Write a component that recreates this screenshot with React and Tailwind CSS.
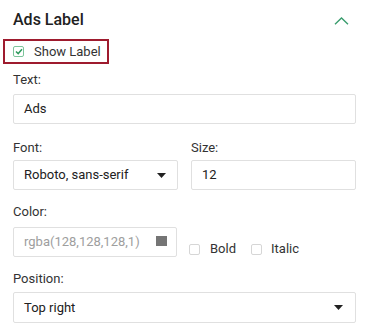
const Caret = () => (
  <svg width="9" height="5" viewBox="0 0 9 5" className="shrink-0">
    <path d="M0 0 L9 0 L4.5 5 Z" fill="#212121" />
  </svg>
);

const Check = ({ checked }) => (
  <span
    className={
      'w-[11px] h-[11px] rounded-[2px] border flex items-center justify-center shrink-0 ' +
      (checked ? 'border-[#7cc49a]' : 'border-[#d6d6d6]')
    }
  >
    {checked && (
      <svg width="8" height="7" viewBox="0 0 8 7">
        <path d="M1 3.5 L3.2 5.6 L7 1.3" fill="none" stroke="#2f9a5e" strokeWidth="1.5" />
      </svg>
    )}
  </span>
);

const App = () => {
  return (
    <div className="w-[369px] h-[331px] bg-white px-[13px] pt-2 font-['Roboto',sans-serif] text-[#212121] overflow-hidden">
      <div className="flex items-center justify-between h-6">
        <h2 className="text-[16px] leading-6 font-medium">Ads Label</h2>
        <svg width="15" height="8" viewBox="0 0 15 8" className="mr-[7px] mt-[2px]">
          <path d="M1 7.2 L7.5 1 L14 7.2" fill="none" stroke="#3a9d6e" strokeWidth="1.4" />
        </svg>
      </div>

      <label className="mt-[7px] -ml-[10px] w-[106px] h-[25px] border-2 border-[#9e1b2e] flex items-center pl-2 gap-[10px]">
        <Check checked />
        <span className="text-[13px] leading-4 text-[#333]">Show Label</span>
      </label>

      <div className="mt-2">
        <div className="text-[13px] leading-4 text-[#333] mb-1.5">Text:</div>
        <div className="h-[30px] border border-[#e0e0e0] rounded-[2px] flex items-center px-[10px] text-[13px]">
          Ads
        </div>
      </div>

      <div className="grid grid-cols-2 gap-[13px] mt-4">
        <div>
          <div className="text-[13px] leading-4 text-[#333] mb-1">Font:</div>
          <div className="h-[30px] border border-[#e0e0e0] rounded-[2px] flex items-center justify-between pl-[10px] pr-[11px] text-[13px]">
            <span>Roboto, sans-serif</span>
            <Caret />
          </div>
        </div>
        <div>
          <div className="text-[13px] leading-4 text-[#333] mb-1">Size:</div>
          <div className="h-[30px] border border-[#e0e0e0] rounded-[2px] flex items-center px-[10px] text-[13px]">
            12
          </div>
        </div>
      </div>

      <div className="mt-[14px]">
        <div className="text-[13px] leading-4 text-[#333] mb-[7px]">Color:</div>
        <div className="flex items-start gap-[12px]">
          <div className="w-[164px] h-[30px] border border-[#e0e0e0] rounded-[2px] flex items-center justify-between pl-[10px] pr-[9px] text-[13px] text-[#9e9e9e]">
            <span>rgba(128,128,128,1)</span>
            <span className="w-[11px] h-[10px] bg-[#757575] -mt-[2px]" />
          </div>
          <div className="flex items-center h-4 mt-[14px] text-[13px] leading-4 text-[#333]">
            <Check />
            <span className="ml-[10px]">Bold</span>
            <span className="ml-[15px]"><Check /></span>
            <span className="ml-[9px]">Italic</span>
          </div>
        </div>
      </div>

      <div className="mt-[14px]">
        <div className="text-[13px] leading-4 text-[#333] mb-[5px]">Position:</div>
        <div className="h-[31px] border border-[#e0e0e0] rounded-[2px] flex items-center justify-between pl-[10px] pr-[12px] text-[13px]">
          <span>Top right</span>
          <Caret />
        </div>
      </div>
    </div>
  );
};

export default App;
